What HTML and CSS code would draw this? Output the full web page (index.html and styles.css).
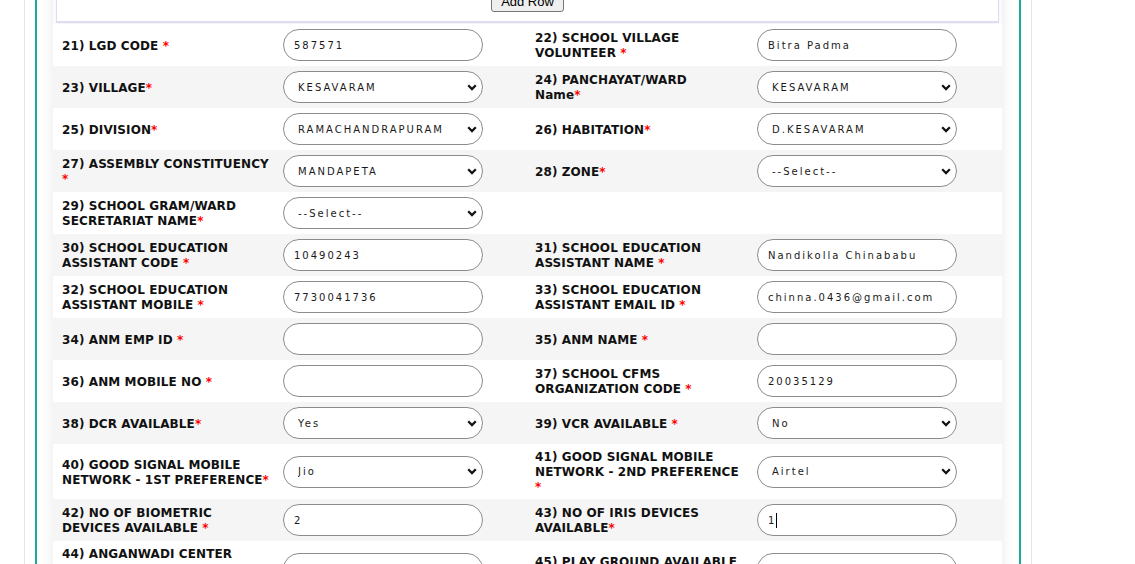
FILE: index.html
```html
<!DOCTYPE html>
<html>
<head>
<meta charset="utf-8">
<link rel="stylesheet" href="styles.css">
</head>
<body>
<div class="outer">
  <div class="teal">
    <div class="card">
      <div class="topbox">
        <button class="btn" type="button">Add Row</button>
      </div>
      <div class="rows">
        <div class="row">
          <div class="lbl">21) LGD CODE <span class="req">*</span></div>
          <div class="fld"><input class="inp" type="text" value="587571"></div>
          <div class="lbl">22) SCHOOL VILLAGE<br>VOLUNTEER <span class="req">*</span></div>
          <div class="fld"><input class="inp" type="text" value="Bitra Padma"></div>
        </div>
        <div class="row">
          <div class="lbl">23) VILLAGE<span class="req">*</span></div>
          <div class="fld"><select class="sel"><option>KESAVARAM</option></select></div>
          <div class="lbl">24) PANCHAYAT/WARD<br>Name<span class="req">*</span></div>
          <div class="fld"><select class="sel"><option>KESAVARAM</option></select></div>
        </div>
        <div class="row">
          <div class="lbl">25) DIVISION<span class="req">*</span></div>
          <div class="fld"><select class="sel"><option>RAMACHANDRAPURAM</option></select></div>
          <div class="lbl">26) HABITATION<span class="req">*</span></div>
          <div class="fld"><select class="sel"><option>D.KESAVARAM</option></select></div>
        </div>
        <div class="row">
          <div class="lbl">27) ASSEMBLY CONSTITUENCY<br><span class="req">*</span></div>
          <div class="fld"><select class="sel"><option>MANDAPETA</option></select></div>
          <div class="lbl">28) ZONE<span class="req">*</span></div>
          <div class="fld"><select class="sel"><option>--Select--</option></select></div>
        </div>
        <div class="row">
          <div class="lbl">29) SCHOOL GRAM/WARD<br>SECRETARIAT NAME<span class="req">*</span></div>
          <div class="fld"><select class="sel"><option>--Select--</option></select></div>
          <div class="lbl"></div>
          <div class="fld"></div>
        </div>
        <div class="row">
          <div class="lbl">30) SCHOOL EDUCATION<br>ASSISTANT CODE <span class="req">*</span></div>
          <div class="fld"><input class="inp" type="text" value="10490243"></div>
          <div class="lbl">31) SCHOOL EDUCATION<br>ASSISTANT NAME <span class="req">*</span></div>
          <div class="fld"><input class="inp" type="text" value="Nandikolla Chinababu"></div>
        </div>
        <div class="row">
          <div class="lbl">32) SCHOOL EDUCATION<br>ASSISTANT MOBILE <span class="req">*</span></div>
          <div class="fld"><input class="inp" type="text" value="7730041736"></div>
          <div class="lbl">33) SCHOOL EDUCATION<br>ASSISTANT EMAIL ID <span class="req">*</span></div>
          <div class="fld"><input class="inp" type="text" value="chinna.0436@gmail.com"></div>
        </div>
        <div class="row">
          <div class="lbl">34) ANM EMP ID <span class="req">*</span></div>
          <div class="fld"><input class="inp" type="text" value=""></div>
          <div class="lbl">35) ANM NAME <span class="req">*</span></div>
          <div class="fld"><input class="inp" type="text" value=""></div>
        </div>
        <div class="row">
          <div class="lbl">36) ANM MOBILE NO <span class="req">*</span></div>
          <div class="fld"><input class="inp" type="text" value=""></div>
          <div class="lbl">37) SCHOOL CFMS<br>ORGANIZATION CODE <span class="req">*</span></div>
          <div class="fld"><input class="inp" type="text" value="20035129"></div>
        </div>
        <div class="row">
          <div class="lbl">38) DCR AVAILABLE<span class="req">*</span></div>
          <div class="fld"><select class="sel"><option>Yes</option></select></div>
          <div class="lbl">39) VCR AVAILABLE <span class="req">*</span></div>
          <div class="fld"><select class="sel"><option>No</option></select></div>
        </div>
        <div class="row">
          <div class="lbl">40) GOOD SIGNAL MOBILE<br>NETWORK - 1ST PREFERENCE<span class="req">*</span></div>
          <div class="fld"><select class="sel"><option>Jio</option></select></div>
          <div class="lbl">41) GOOD SIGNAL MOBILE<br>NETWORK - 2ND PREFERENCE<br><span class="req">*</span></div>
          <div class="fld"><select class="sel"><option>Airtel</option></select></div>
        </div>
        <div class="row">
          <div class="lbl">42) NO OF BIOMETRIC<br>DEVICES AVAILABLE <span class="req">*</span></div>
          <div class="fld"><input class="inp" type="text" value="2"></div>
          <div class="lbl">43) NO OF IRIS DEVICES<br>AVAILABLE<span class="req">*</span></div>
          <div class="fld"><span class="caretwrap"><input class="inp" type="text" value="1"><span class="caret"></span></span></div>
        </div>
        <div class="row">
          <div class="lbl">44) ANGANWADI CENTER<br>NEAR BY SCHOOL<br>AVAILABLE <span class="req">*</span></div>
          <div class="fld"><input class="inp" type="text" value=""></div>
          <div class="lbl">45) PLAY GROUND AVAILABLE<br><span class="req">*</span></div>
          <div class="fld"><input class="inp" type="text" value=""></div>
        </div>
      </div>
    </div>
  </div>
</div>
</body>
</html>
```

FILE: styles.css
```css
html, body {
  margin: 0;
  padding: 0;
  background: #ffffff;
  overflow: hidden;
}

body {
  font-family: "DejaVu Sans", Verdana, sans-serif;
  color: #111111;
}

.outer {
  margin-left: 24px;
  width: 986px;
  padding: 0 10px;
  border-left: 1px solid #e6e6e6;
  border-right: 1px solid #e6e6e6;
  min-height: 600px;
}

.teal {
  border-left: 2px solid #18aa9a;
  border-right: 2px solid #18aa9a;
  padding: 0 17px 0 16px;
  min-height: 600px;
}

.card {
  width: 949px;
  background: #ffffff;
  box-shadow: 0 0 12px rgba(0, 0, 0, 0.09);
}

.topbox {
  box-sizing: border-box;
  margin: -30px 3px 1px;
  height: 53px;
  border: 1px solid #dcdcf2;
  border-bottom: 2px solid #dedcf0;
  display: flex;
  justify-content: center;
  align-items: flex-end;
  padding-bottom: 9px;
  background: #ffffff;
  box-shadow: 0 3px 8px rgba(0, 0, 0, 0.05);
}

.btn {
  font-family: "Liberation Sans", Arial, sans-serif;
  font-size: 13px;
  color: #000000;
  background: #efefef;
  border: 1px solid #767676;
  border-radius: 3px;
  padding: 2px 9px;
  height: 21px;
  line-height: 15px;
}

.row {
  display: grid;
  grid-template-columns: 222px 251px 223px 253px;
  align-items: center;
  min-height: 42px;
  box-sizing: border-box;
  padding: 5px 0;
  background: #ffffff;
}

.row:nth-child(even) {
  background: #f5f5f5;
}

.lbl {
  font-size: 12px;
  font-weight: bold;
  line-height: 15px;
  padding-left: 9px;
  padding-top: 1px;
  margin-bottom: -1px;
  white-space: nowrap;
  letter-spacing: 0.1px;
}

.req {
  color: #ff0000;
}

.fld {
  padding-left: 8px;
  display: flex;
  align-items: center;
}

.inp,
.sel {
  box-sizing: border-box;
  width: 200px;
  height: 32px;
  border: 1px solid #8c8c8c;
  border-radius: 16px;
  background-color: #ffffff;
  font-family: "DejaVu Sans", Verdana, sans-serif;
  font-size: 10px;
  letter-spacing: 2px;
  color: #1a1a1a;
  outline: none;
  margin: 0;
}

.inp {
  padding: 0 10px;
}

.caretwrap {
  position: relative;
  display: inline-flex;
}

.caret {
  position: absolute;
  left: 19px;
  top: 9px;
  width: 1px;
  height: 15px;
  background: #000000;
}

.sel {
  -webkit-appearance: none;
  appearance: none;
  padding: 0 20px 0 14px;
  background-image: url("data:image/svg+xml;utf8,<svg xmlns='http://www.w3.org/2000/svg' width='10' height='7' viewBox='0 0 10 7'><path d='M1.2 1.3 L5 5.1 L8.8 1.3' fill='none' stroke='%23111' stroke-width='2.2'/></svg>");
  background-repeat: no-repeat;
  background-position: right 5px center;
}
```
